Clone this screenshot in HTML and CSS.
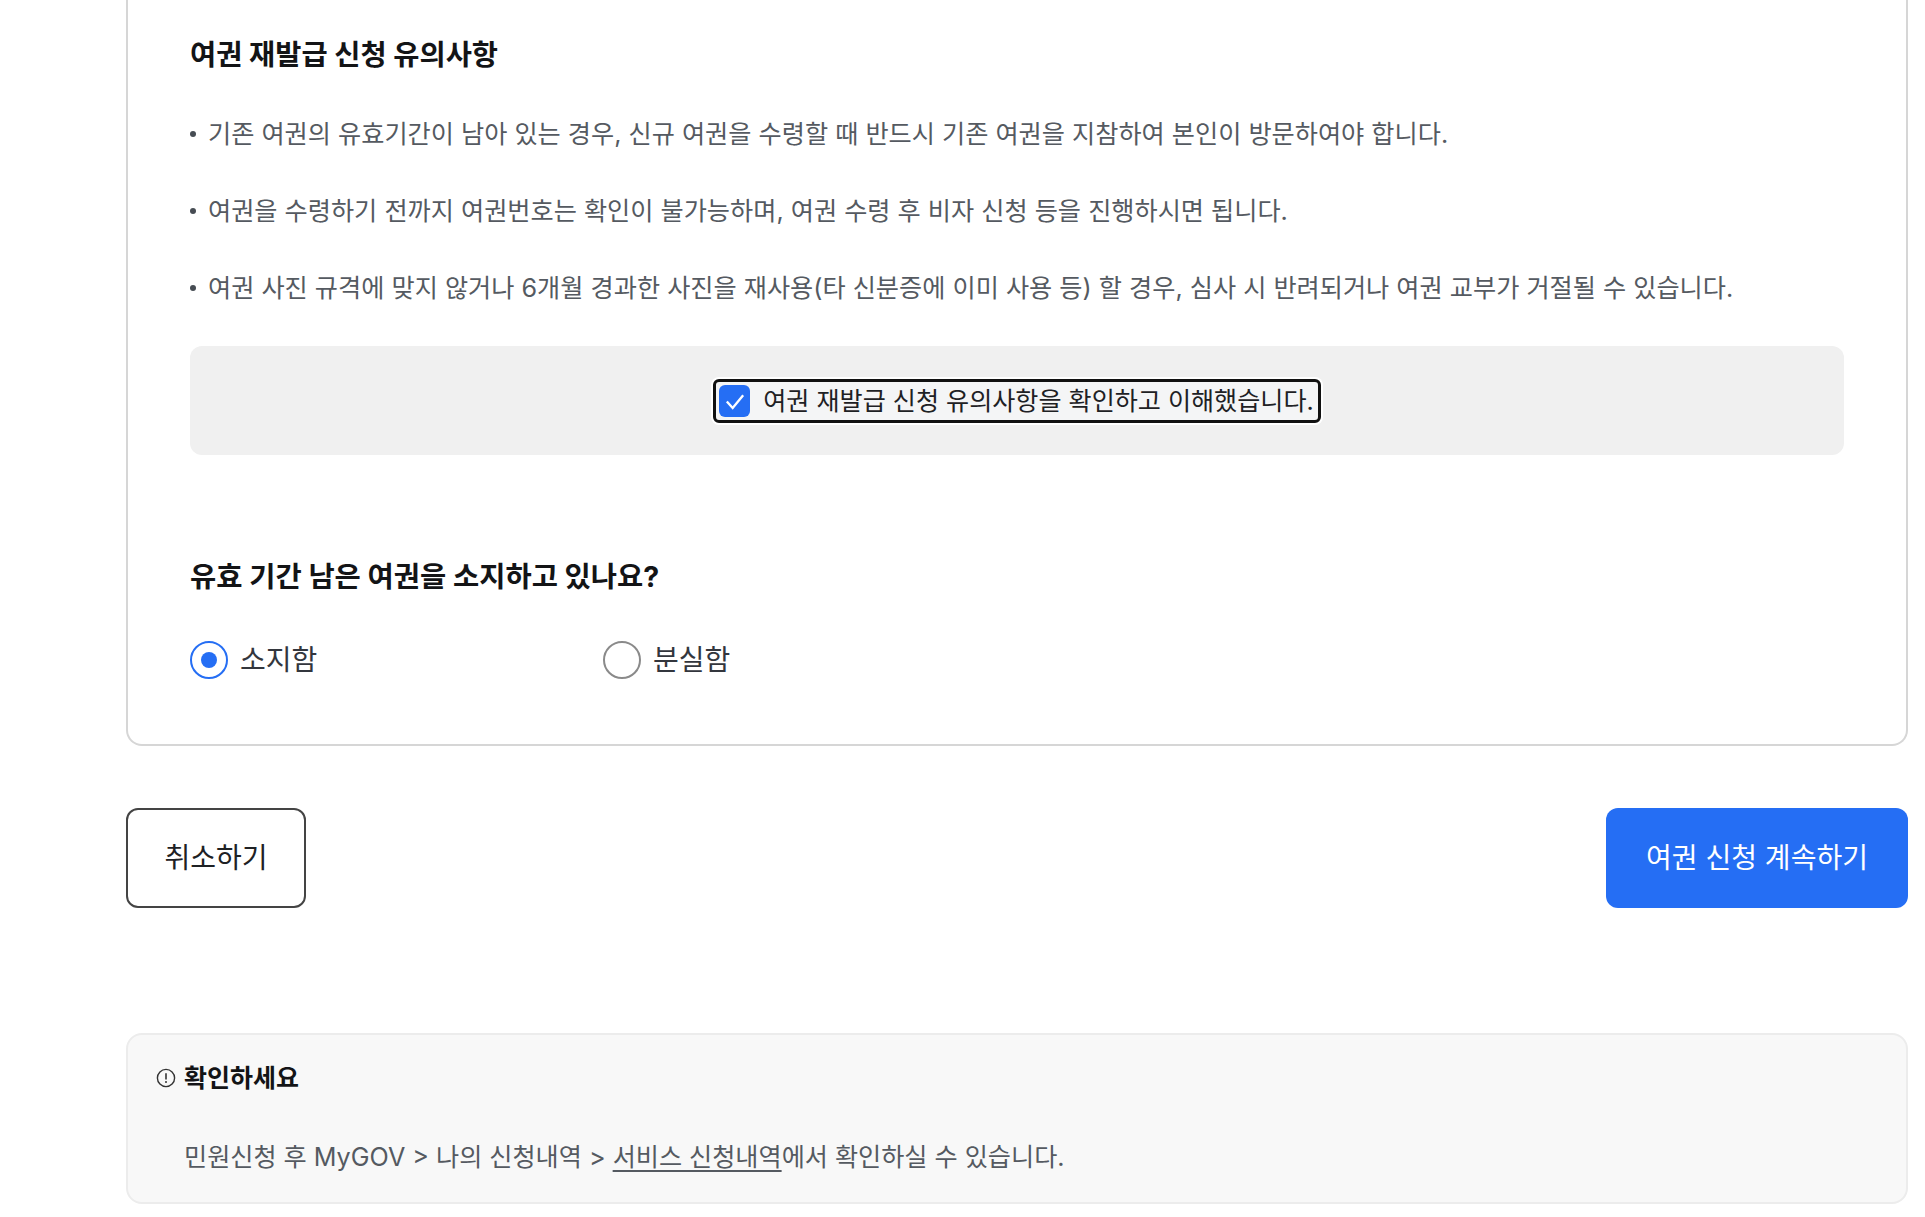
FILE: index.html
```html
<!DOCTYPE html>
<html lang="ko">
<head>
<meta charset="utf-8">
<title>여권 재발급 신청</title>
<link rel="stylesheet" href="styles.css">
</head>
<body>
<main class="page">
  <section class="card">
    <h2 class="title">여권 재발급 신청 유의사항</h2>
    <ul class="notes">
      <li>기존 여권의 유효기간이 남아 있는 경우, 신규 여권을 수령할 때 반드시 기존 여권을 지참하여 본인이 방문하여야 합니다.</li>
      <li>여권을 수령하기 전까지 여권번호는 확인이 불가능하며, 여권 수령 후 비자 신청 등을 진행하시면 됩니다.</li>
      <li>여권 사진 규격에 맞지 않거나 6개월 경과한 사진을 재사용(타 신분증에 이미 사용 등) 할 경우, 심사 시 반려되거나 여권 교부가 거절될 수 있습니다.</li>
    </ul>
    <div class="agree">
      <label class="agree-label">
        <span class="check"><svg viewBox="0 0 24 24" width="28" height="28"><path d="M5 12.5l5 5.5 9-11" fill="none" stroke="#fff" stroke-width="2"/></svg></span>
        <span>여권 재발급 신청 유의사항을 확인하고 이해했습니다.</span>
      </label>
    </div>
    <h2 class="question">유효 기간 남은 여권을 소지하고 있나요?</h2>
    <div class="radios">
      <label class="radio-item"><span class="radio radio-on"></span><span>소지함</span></label>
      <label class="radio-item"><span class="radio"></span><span>분실함</span></label>
    </div>
  </section>
  <div class="actions">
    <button class="btn btn-cancel">취소하기</button>
    <button class="btn btn-primary">여권 신청 계속하기</button>
  </div>
  <aside class="notice">
    <h3 class="notice-title">
      <svg class="notice-icon" viewBox="0 0 20 20" width="20" height="20"><circle cx="10" cy="10" r="8.6" fill="none" stroke="#333" stroke-width="1.4"/><path d="M10 5.2v6.3" stroke="#333" stroke-width="1.6" fill="none"/><circle cx="10" cy="14" r="1" fill="#333"/></svg>
      확인하세요
    </h3>
    <p class="notice-text">민원신청 후 MyGOV &gt; 나의 신청내역 &gt; <a class="link">서비스 신청내역</a>에서 확인하실 수 있습니다.</p>
  </aside>
</main>
</body>
</html>
```
FILE: styles.css
```css
* { box-sizing: border-box; }
html, body { margin: 0; height: 100%; overflow: hidden; background: #fff; }
body { font-family: Inter, "Noto Sans CJK KR", "Noto Sans", sans-serif; color: #1e2124; }
.page { width: 1782px; margin-left: 126px; }
.card {
  border: 2px solid #d6d6d6; border-top: 0; border-radius: 0 0 16px 16px;
  height: 746px; padding: 34px 62px 0;
}
.title { margin: 0; font-size: 28.45px; line-height: 42px; font-weight: 700; color: #131416; }
.notes { list-style: none; margin: 38px 0 0; padding: 0; display: flex; flex-direction: column; gap: 37px; }
.notes li { font-size: 25.2px; line-height: 40px; color: #555a61; position: relative; padding-left: 18px; }
.notes li::before { content: ""; position: absolute; left: 0; top: 17px; width: 6px; height: 6px; border-radius: 50%; background: #464c53; }
.agree { margin-top: 38px; height: 109px; background: #f0f0f0; border-radius: 12px; display: flex; align-items: center; justify-content: center; }
.agree-label {
  display: flex; align-items: center; gap: 13px; font-size: 25.1px; line-height: 36px; color: #1e2124;
  height: 44px; padding: 0 4px 0 3px; background: #f4f5f6; border: 3px solid #111; border-radius: 6px;
  box-shadow: 0 0 0 2px #fff;
}
.check { width: 31px; height: 32px; background: #256ef4; border-radius: 6px; display: flex; align-items: center; justify-content: center; }
.question { margin: 101px 0 0; font-size: 28.5px; line-height: 42px; font-weight: 700; color: #131416; }
.radios { display: flex; margin-top: 43px; }
.radio-item { display: flex; align-items: center; gap: 12px; width: 413px; font-size: 28px; line-height: 38px; color: #33363d; }
.radio { width: 38px; height: 38px; border-radius: 50%; border: 2px solid #8a8a8a; background: #fff; display: flex; align-items: center; justify-content: center; }
.radio-on { border-color: #256ef4; }
.radio-on::after { content: ""; width: 16px; height: 16px; border-radius: 50%; background: #256ef4; }
.actions { display: flex; justify-content: space-between; margin-top: 62px; }
.btn { height: 100px; font-family: inherit; font-size: 28px; border-radius: 12px; padding: 0 0 4px; }
.btn-cancel { width: 180px; background: #fff; border: 2px solid #444; color: #1e2124; }
.btn-primary { width: 302px; background: #256ef4; border: 0; color: #fff; }
.notice {
  margin-top: 125px; height: 171px; background: #f8f8f8; border: 2px solid #ececec; border-radius: 16px;
  padding: 23px 28px 0;
}
.notice-title { margin: 0; display: flex; align-items: center; gap: 8px; font-size: 25px; line-height: 40px; font-weight: 700; color: #131416; }
.notice-icon { flex: none; }
.notice-text { margin: 39px 0 0 28px; font-size: 25.15px; line-height: 40px; color: #555a61; }
.link { text-decoration: underline; text-underline-offset: 4px; }
```
